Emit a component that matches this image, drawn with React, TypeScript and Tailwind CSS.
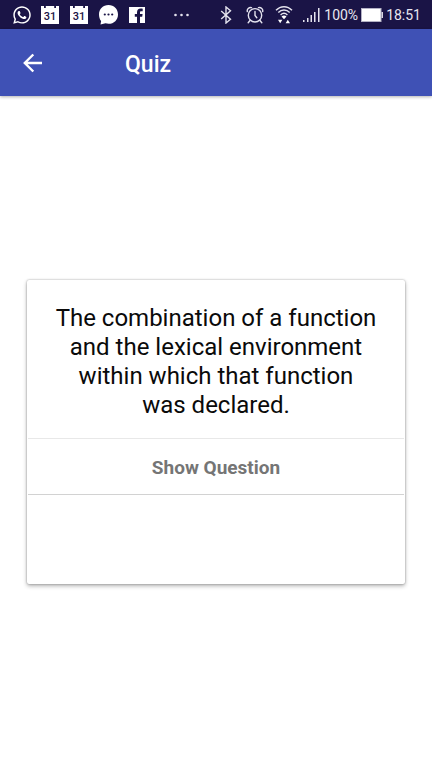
import { FaWhatsapp } from "react-icons/fa";

function CalendarIcon() {
  return (
    <svg viewBox="0 0 20 20" className="h-5 w-5" aria-hidden="true">
      <path d="M0 1h18v18H0z" fill="#fff" />
      <path d="M3 1h1.800v2H3zM13.200 1H15v2h-1.800z" fill="#1a1446" />
      <text x="9" y="14.500" textAnchor="middle" fontSize="11" fontWeight="500" fill="#1a1446" fontFamily="Roboto, sans-serif">
        31
      </text>
    </svg>
  );
}

function BubbleIcon() {
  return (
    <svg viewBox="0 0 20 20" className="h-5 w-5" aria-hidden="true">
      <path d="M9.500 0C15 0 19 4 19 9.400s-4 9.400-9.500 9.400c-1 0-2-.2-3-.5L1.500 19.500l.6-3.600C.7 14.200 0 12 0 9.400 0 4 4 0 9.500 0z" fill="#fff" />
      <g fill="#1a1446">
        <circle cx="5.800" cy="9.500" r="1.100" />
        <circle cx="9.500" cy="9.500" r="1.100" />
        <circle cx="13.200" cy="9.500" r="1.100" />
      </g>
    </svg>
  );
}

function FacebookIcon() {
  return (
    <svg viewBox="0 0 20 20" className="h-5 w-5" aria-hidden="true">
      <rect x="1" y="2" width="16" height="16" fill="#fff" />
      <path d="M9 18v-6.200H6.800V9H9V7.500c0-2.500 1.400-3.900 3.700-3.900.9 0 1.700.1 2 .2v2.500h-1.400c-1 0-1.300.5-1.300 1.300V9h2.600l-.4 2.800H12V18z" fill="#1a1446" />
    </svg>
  );
}

function DotsIcon() {
  return (
    <svg viewBox="0 0 16 4" className="h-1 w-4" fill="#e4e3ee" aria-hidden="true">
      <circle cx="1.500" cy="2" r="1.300" />
      <circle cx="7.500" cy="2" r="1.300" />
      <circle cx="13.500" cy="2" r="1.300" />
    </svg>
  );
}

function BluetoothIcon() {
  return (
    <svg viewBox="0 0 12 18" className="h-[18px] w-3" fill="none" stroke="#e4e3ee" strokeWidth="1.400" aria-hidden="true">
      <path d="M1.200 5l9.300 8.200L6 17V1l4.500 3.800L1.200 13" />
    </svg>
  );
}

function AlarmIcon() {
  return (
    <svg viewBox="0 0 18 18" className="h-[18px] w-[18px]" fill="none" stroke="#e4e3ee" strokeWidth="1.400" strokeLinecap="round" aria-hidden="true">
      <circle cx="9" cy="9.300" r="6.700" />
      <path d="M9 5.500v4l1.800 2.300M4.200 14.300l-2 2.500M13.800 14.300l2 2.500" />
      <path d="M1.300 5.500C.8 3.200 2.900 1 5.500 1.600M16.700 5.500c.5-2.300-1.600-4.500-4.200-3.900" />
    </svg>
  );
}

function WifiIcon() {
  return (
    <svg viewBox="0 0 18 19" className="h-[19px] w-[18px]" fill="none" stroke="#e4e3ee" strokeWidth="1.400" aria-hidden="true">
      <path d="M1 5.300c4.600-4.800 11.400-4.800 16 0M3.300 7.600c3.300-3.400 8.100-3.400 11.400 0M5.600 9.900c2-2 4.800-2 6.800 0" />
      <path d="M6.500 11.500c1.500-1.300 3.500-1.300 5 0L9 14.300zM3 14.800h4.400l-2.200 3.500zM10.600 18.300H15l-2.200-3.600z" fill="#fff" stroke="none" />
    </svg>
  );
}

function SignalIcon() {
  return (
    <svg viewBox="0 0 17 15" className="h-[15px] w-[17px]" fill="#e4e3ee" aria-hidden="true">
      <rect x="0" y="13" width="1.500" height="2" />
      <rect x="4" y="11" width="1.500" height="4" />
      <rect x="7.500" y="8" width="1.500" height="7" />
      <rect x="11" y="5" width="1.500" height="10" />
      <rect x="15" y="1" width="1.500" height="14" />
    </svg>
  );
}

function BatteryIcon() {
  return (
    <svg viewBox="0 0 22 14" className="h-3.5 w-[22px]" aria-hidden="true">
      <rect x=".5" y=".5" width="19.500" height="13" fill="#fff" stroke="#b3b1c4" />
      <rect x="20.500" y="4" width="1.500" height="6" fill="#d8d7e2" />
    </svg>
  );
}

function StatusBar() {
  return (
    <div className="flex h-[29px] items-center bg-[#1a1446] pr-[11px] pl-3 text-[14px] leading-4 text-[#e8e7f0]">
      <div className="flex items-center gap-[9px]">
        <FaWhatsapp className="h-5 w-5 text-white" aria-hidden="true" />
        <CalendarIcon />
        <CalendarIcon />
        <BubbleIcon />
        <FacebookIcon />
      </div>
      <div className="ml-[26px]">
        <DotsIcon />
      </div>
      <div className="ml-auto flex items-center">
        <div className="flex items-center gap-3.5">
          <BluetoothIcon />
          <AlarmIcon />
        </div>
        <div className="ml-[11px] flex items-center gap-2.5">
          <WifiIcon />
          <SignalIcon />
        </div>
        <div className="ml-1 flex items-center gap-[3px]">
          <span>100%</span>
          <BatteryIcon />
          <span>18:51</span>
        </div>
      </div>
    </div>
  );
}

export default function App() {
  return (
    <div className="flex min-h-screen flex-col bg-white font-['Roboto',sans-serif]">
      <StatusBar />
      <header className="flex h-[67px] items-center bg-[#3f51b5] px-5 text-white shadow-[0_1px_3px_rgba(0,0,0,0.3)]">
        <button type="button" aria-label="Back" className="flex h-10 w-6 items-center justify-center">
          <svg viewBox="0 0 24 24" className="h-6 w-6" fill="none" stroke="currentColor" strokeWidth="2.400" aria-hidden="true">
            <path d="M22 12H5M13.300 3.500L4.800 12l8.500 8.500" />
          </svg>
        </button>
        <h1 className="ml-[81px] pt-1 text-[23px] leading-7 font-medium">Quiz</h1>
      </header>
      <main className="flex flex-1 flex-col justify-center px-[27px]">
        <section className="rounded-xs bg-white px-px pb-[89px] shadow-[0_0_2px_rgba(0,0,0,0.35),0_2px_4px_rgba(0,0,0,0.3)]">
          <p className="px-6 pt-6 pb-[18px] text-center text-[24px] leading-[29px] text-[#0a0a0a]">
            The combination of a function and the lexical environment within which that function was&nbsp;declared.
          </p>
          <button
            type="button"
            className="h-[57px] w-full border-t border-b border-t-[#e8e8e8] border-b-[#d2d2d2] pt-0.5 text-[19px] leading-6 font-bold text-[#757575]"
          >
            Show Question
          </button>
        </section>
      </main>
    </div>
  );
}
